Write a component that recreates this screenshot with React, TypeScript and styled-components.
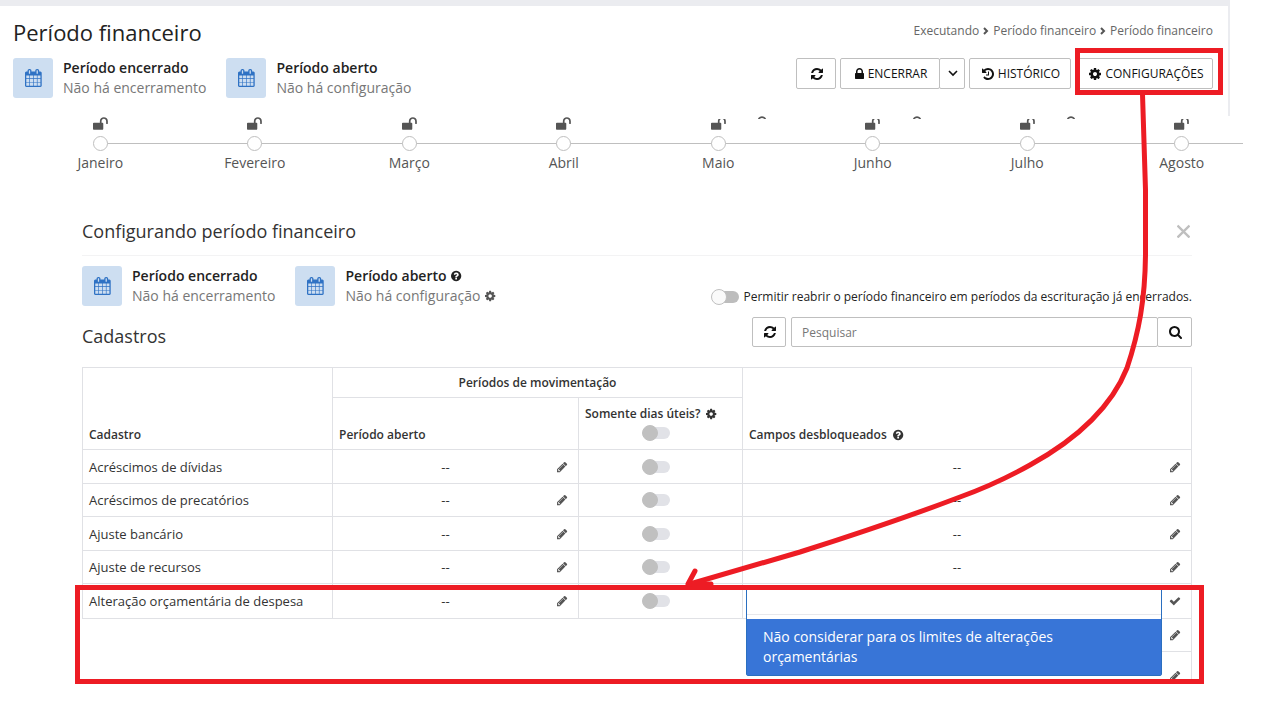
import React from "react";
import styled, { createGlobalStyle, css } from "styled-components";

const RED = "#ed1c24";
const LINE = "#e0e1e5";
const EDGE = "#bfbfbf";

const GlobalStyle = createGlobalStyle`
  *, *::before, *::after { box-sizing: border-box; }
  body { margin: 0; background: #fff; color: #222; font-family: "Open Sans", "Liberation Sans", sans-serif; font-size: 12px; }
  button, input { font: inherit; color: inherit; }
  h1, h2, h3, ul, p { margin: 0; padding: 0; font-weight: 400; }
`;

/* Icon outlines: [advance width, path] on a 1792-unit high grid */
const GLYPHS = {
  calendar: [1664, "M128 1664h288v-288h-288v288zM480 1664h320v-288h-320v288zM128 1312h288v-320h-288v320zM480 1312h320v-320h-320v320zM128 928h288v-288h-288v288zM864 1664h320v-288h-320v288zM480 928h320v-288h-320v288zM1248 1664h288v-288h-288v288zM864 1312h320v-320h-320v320zM512 448v-288q0-13-9.5-22.5t-22.5-9.5h-64q-13 0-22.5 9.5t-9.5 22.5v288q0 13 9.5 22.5t22.5 9.5h64q13 0 22.5-9.5t9.5-22.5zM1248 1312h288v-320h-288v320zM864 928h320v-288h-320v288zM1248 928h288v-288h-288v288zM1280 448v-288q0-13-9.5-22.5t-22.5-9.5h-64q-13 0-22.5 9.5t-9.5 22.5v288q0 13 9.5 22.5t22.5 9.5h64q13 0 22.5-9.5t9.5-22.5zM1664 384v1280q0 52-38 90t-90 38h-1408q-52 0-90-38t-38-90v-1280q0-52 38-90t90-38h128v-96q0-66 47-113t113-47h64q66 0 113 47t47 113v96h384v-96q0-66 47-113t113-47h64q66 0 113 47t47 113v96h128q52 0 90 38t38 90z"],
  refresh: [1536, "M1511 1056q0 5-1 7-64 268-268 434.500t-478 166.500q-146 0-282.500-55t-243.500-157l-129 129q-19 19-45 19t-45-19-19-45v-448q0-26 19-45t45-19h448q26 0 45 19t19 45-19 45l-137 137q71 66 161 102t187 36q134 0 250-65t186-179q11-17 53-117 8-23 30-23h192q13 0 22.500 9.500t9.500 22.500zM1536 256v448q0 26-19 45t-45 19h-448q-26 0-45-19t-19-45 19-45l138-138q-148-137-349-137-134 0-250 65t-186 179q-11 17-53 117-8 23-30 23h-199q-13 0-22.500-9.500t-9.500-22.500v-7q65-268 270-434.500t480-166.500q146 0 284 55.500t245 156.500l130-129q19-19 45-19t45 19 19 45z"],
  lock: [1152, "M320 768h512v-192q0-106-75-181t-181-75-181 75-75 181v192zM1152 864v576q0 40-28 68t-68 28h-960q-40 0-68-28t-28-68v-576q0-40 28-68t68-28h32v-192q0-184 132-316t316-132 316 132 132 316v192h32q40 0 68 28t28 68z"],
  unlock: [1664, "M1664 576v256q0 26-19 45t-45 19h-64q-26 0-45-19t-19-45v-256q0-106-75-181t-181-75-181 75-75 181v192h96q40 0 68 28t28 68v576q0 40-28 68t-68 28h-960q-40 0-68-28t-28-68v-576q0-40 28-68t68-28h672v-192q0-185 131.500-316.500t316.500-131.500 316.500 131.500 131.500 316.500z"],
  history: [1536, "M1536 896q0 156-61 298t-164 245-245 164-298 61q-172 0-327-72.500t-264-204.500q-7-10-6.500-22.500t8.500-20.500l137-138q10-9 25-9 16 2 23 12 73 95 179 147t225 52q104 0 198.500-40.500t163.500-109.500 109.500-163.500 40.500-198.500-40.500-198.500-109.500-163.500-163.500-109.500-198.500-40.500q-98 0-188 35.500t-160 101.500l137 138q31 30 14 69-17 40-59 40h-448q-26 0-45-19t-19-45v-448q0-42 40-59 39-17 69 14l130 129q107-101 244.500-156.500t284.500-55.500q156 0 298 61t245 164 164 245 61 298zM896 608v448q0 14-9 23t-23 9h-320q-14 0-23-9t-9-23v-64q0-14 9-23t23-9h224v-352q0-14 9-23t23-9h64q14 0 23 9t9 23z"],
  cog: [1536, "M1024 896q0-106-75-181t-181-75-181 75-75 181 75 181 181 75 181-75 75-181zM1536 787v222q0 12-8 23t-20 13l-185 28q-19 54-39 91 35 50 107 138 10 12 10 25t-9 23q-27 37-99 108t-94 71q-12 0-26-9l-138-108q-44 23-91 38-16 136-29 186-7 28-36 28h-222q-14 0-24.500-8.500t-11.500-21.500l-28-184q-49-16-90-37l-141 107q-10 9-25 9-14 0-25-11-126-114-165-168-7-10-7-23 0-12 8-23 15-21 51-66.500t54-70.500q-27-50-41-99l-183-27q-13-2-21-12.500t-8-23.500v-222q0-12 8-23t19-13l186-28q14-46 39-92-40-57-107-138-10-12-10-24 0-10 9-23 26-36 98.500-107.500t94.500-71.500q13 0 26 10l138 107q44-23 91-38 16-136 29-186 7-28 36-28h222q14 0 24.500 8.500t11.500 21.500l28 184q49 16 90 37l142-107q9-9 24-9 13 0 25 10 129 119 165 170 7 8 7 22 0 12-8 23-15 21-51 66.500t-54 70.500q26 50 41 98l183 28q13 2 21 12.500t8 23.500z"],
  search: [1664, "M1152 832q0-185-131.500-316.500t-316.500-131.500-316.500 131.500-131.500 316.500 131.500 316.500 316.500 131.500 316.500-131.500 131.500-316.500zM1664 1664q0 52-38 90t-90 38q-54 0-90-38l-343-342q-179 124-399 124-143 0-273.500-55.500t-225-150-150-225-55.500-273.500 55.500-273.500 150-225 225-150 273.500-55.500 273.500 55.500 225 150 150 225 55.500 273.500q0 220-124 399l343 343q37 37 37 90z"],
  question: [1536, "M896 1376v-192q0-14-9-23t-23-9h-192q-14 0-23 9t-9 23v192q0 14 9 23t23 9h192q14 0 23-9t9-23zM1152 704q0-88-55.500-163t-138.500-116-170-41q-243 0-371 213-15 24 8 42l132 100q7 6 19 6 16 0 25-12 53-68 86-92 34-24 86-24 48 0 85.500 26t37.500 59q0 38-20 61t-68 45q-63 28-115.500 86.500t-52.500 125.500v36q0 14 9 23t23 9h192q14 0 23-9t9-23q0-19 21.500-49.500t54.500-49.500q32-18 49-28.500t46-35 44.500-48 28-60.500 12.500-81zM1536 896q0 209-103 385.500t-279.500 279.500-385.500 103-385.500-103-279.500-279.500-103-385.500 103-385.500 279.500-279.500 385.500-103 385.500 103 279.500 279.500 103 385.500z"],
  pencil: [1536, "M363 1536l91-91-235-235-91 91v107h128v128h107zM886 608q0-22-22-22-10 0-17 7l-542 542q-7 7-7 17 0 22 22 22 10 0 17-7l542-542q7-7 7-17zM832 416l416 416-832 832h-416v-416zM1515 512q0 53-37 90l-166 166-416-416 166-165q36-38 90-38 53 0 91 38l235 234q37 39 37 91z"],
  check: [1792, "M1671 566q0 40-28 68l-724 724-136 136q-28 28-68 28t-68-28l-136-136-362-362q-28-28-28-68t28-68l136-136q28-28 68-28t68 28l294 295 656-657q28-28 68-28t68 28l136 136q28 28 28 68z"],
} as const;

const Svg = styled.svg`
  display: block;
  flex: none;
  fill: currentColor;
  overflow: visible;
`;

function Icon({ name, size = 14 }: { name: keyof typeof GLYPHS; size?: number }) {
  const [w, d] = GLYPHS[name];
  return (
    <Svg height={size} width={(size * w) / 1792} viewBox={`0 0 ${w} 1792`} aria-hidden="true">
      <path d={d} />
    </Svg>
  );
}

const Page = styled.div`
  position: relative;
  overflow: hidden;
  padding-bottom: 23px;
`;

const Shell = styled.header`
  display: flex;
  justify-content: space-between;
  margin-right: 38px;
  padding: 12px 15px 18px 13px;
  border-top: 6px solid #ebecf0;
  border-right: 2px solid #ebecf0;
`;

const PageTitle = styled.h1`
  font-size: 22px;
  line-height: 28px;
  margin-bottom: 12px;
`;

const Infos = styled.div`
  display: flex;
  gap: 20px;
`;

const Info = styled.div`
  display: flex;
  gap: 10px;
  font-size: 14px;
  line-height: 20px;
`;

const Tile = styled.div`
  display: grid;
  place-items: center;
  width: 40px;
  height: 40px;
  border-radius: 3px;
  background: #cddef1;
  color: #2f72c4;
`;

const InfoLine = styled.p<{ $strong?: boolean }>`
  display: flex;
  align-items: center;
  gap: 4px;
  color: ${(p) => (p.$strong ? "#222" : "#777")};
  font-weight: ${(p) => (p.$strong ? 600 : 400)};
`;

const Side = styled.div`
  display: flex;
  flex-direction: column;
  align-items: flex-end;
  gap: 17px;
  padding-top: 3px;
`;

const Crumbs = styled.nav`
  display: flex;
  align-items: center;
  gap: 4px;
  line-height: 20px;
  color: #666;
  a { color: inherit; text-decoration: none; }
`;

const Actions = styled.div`
  display: flex;
  gap: 4px;
`;

const Joined = styled.div`
  display: flex;
  > * + * { margin-left: -1px; }
`;

const Button = styled.button<{ $width: number; $height?: number }>`
  display: flex;
  align-items: center;
  justify-content: center;
  gap: 4px;
  flex: none;
  height: ${(p) => p.$height ?? 31}px;
  width: ${(p) => p.$width}px;
  padding: 0 0 0 2px;
  border: 1px solid ${EDGE};
  border-radius: 2px;
  background: #fff;
  color: #111;
`;

const frame = css`
  content: "";
  position: absolute;
  border: 5px solid ${RED};
  pointer-events: none;
  z-index: 3;
`;

const Framed = styled.div`
  position: relative;
  margin-left: 3px;
  &::after { ${frame} inset: -10px -10px -6px -3px; }
`;

const Timeline = styled.ol`
  display: grid;
  grid-template-columns: repeat(8, 1fr);
  margin: 0 9px 0 23px;
  padding: 0;
  list-style: none;
`;

const Month = styled.li<{ $last: boolean }>`
  position: relative;
  display: flex;
  flex-direction: column;
  align-items: center;
  font-size: 14px;
  line-height: 20px;
  color: #555;
  &::before {
    content: "";
    position: absolute;
    top: 27px;
    left: 50%;
    width: ${(p) => (p.$last ? "61px" : "100%")};
    height: 1px;
    background: ${EDGE};
  }
`;

const MonthLock = styled.span<{ $cut: boolean }>`
  height: 20px;
  clip-path: ${(p) => (p.$cut ? "inset(3px -2px 0 -2px)" : "none")};
`;

const Dot = styled.span`
  position: relative;
  z-index: 1;
  width: 15px;
  height: 15px;
  margin-bottom: 2px;
  border: 1px solid ${EDGE};
  border-radius: 50%;
  background: #fff;
`;

const Arc = styled.svg`
  position: absolute;
  top: 0;
  left: calc(50% + 40px);
`;

const Panel = styled.main`
  margin: 46px 76px 0 82px;
`;

const PanelHead = styled.div`
  display: flex;
  justify-content: space-between;
  align-items: center;
  padding-bottom: 12px;
  border-bottom: 1px solid #f3f3f4;
  margin-bottom: 10px;
  h2 { font-size: 18px; line-height: 24px; color: #333; }
`;

const Plain = styled.button<{ $width: number; $color: string }>`
  display: inline-flex;
  align-items: center;
  justify-content: center;
  flex: none;
  width: ${(p) => p.$width}px;
  padding: 0;
  border: 0;
  background: none;
  color: ${(p) => p.$color};
`;

const Bar = styled.div`
  display: flex;
  justify-content: space-between;
  align-items: flex-end;
  h3 { font-size: 18px; line-height: 22px; color: #333; }
  & + & { margin-top: 11px; }
`;

const SwitchLabel = styled.label`
  display: flex;
  align-items: center;
  gap: 4px;
  line-height: 18px;
`;

const Switch = styled.input<{ $outlined?: boolean }>`
  appearance: none;
  position: relative;
  display: block;
  flex: none;
  width: 28px;
  height: 16px;
  margin: 0;
  &::before {
    content: "";
    position: absolute;
    inset: 2px 0 2px 4px;
    border-radius: 6px;
    background: ${(p) => (p.$outlined ? "#bdbdbd" : "#e1e2e7")};
  }
  &::after {
    content: "";
    position: absolute;
    left: 0;
    top: 0;
    width: 16px;
    height: 16px;
    border-radius: 50%;
    background: ${(p) => (p.$outlined ? "#fafafa" : "#c0c0c0")};
    border: 1px solid #c0c0c0;
  }
`;

const Search = styled.form`
  display: flex;
  justify-content: flex-end;
  gap: 5px;
  width: 50%;
  ${Joined} { width: 401px; }
`;

const SearchInput = styled.input`
  flex: 1;
  min-width: 0;
  height: 30px;
  padding: 0 10px;
  border: 1px solid ${EDGE};
  border-radius: 2px;
  &::placeholder { color: #777; opacity: 1; }
`;

const TableArea = styled.div`
  position: relative;
  margin-top: 20px;
  height: 312px;
  &::after { ${frame} inset: 218px -12px -5px -7px; }
`;

const TableClip = styled.div`
  height: 100%;
  overflow: hidden;
`;

const Table = styled.table`
  width: 100%;
  table-layout: fixed;
  border-collapse: separate;
  border-spacing: 0;
  border-top: 1px solid ${LINE};
  line-height: 18px;
  th, td {
    padding: 0 6px;
    text-align: left;
    border-right: 1px solid ${LINE};
    border-bottom: 1px solid ${LINE};
  }
  thead tr:first-child th:first-child, td:first-child { border-left: 1px solid ${LINE}; }
  td { font-size: 13px; color: #333; }
  th { font-weight: 600; color: #333; vertical-align: bottom; padding-bottom: 5px; }
  tbody tr { height: 33px; }
  tbody tr:nth-child(odd) { height: 34px; }
  tbody tr:nth-child(5) { height: 35px; }
`;

const GroupTh = styled.th`
  && { height: 30px; text-align: center; }
`;

const SubTh = styled.th`
  height: 52px;
`;

const SwitchBox = styled.div`
  display: flex;
  justify-content: center;
  padding-right: 10px;
  th & { padding-top: 2px; padding-bottom: 3px; }
`;

const HeadText = styled.span`
  display: flex;
  align-items: center;
  gap: 6px;
`;

const Value = styled.div`
  display: flex;
  align-items: center;
  span { flex: 1; text-align: center; }
`;

const BlankTd = styled.td`
  &&&:first-child { border: 0; }
`;

const TailTd = styled.td`
  && { border-bottom: 0; padding: 0; }
`;

const TailEdit = styled.div<{ $height: number }>`
  display: flex;
  align-items: center;
  height: ${(p) => p.$height}px;
  width: 29px;
  margin-left: auto;
  padding-left: 3px;
  border-bottom: 1px solid ${LINE};
`;

const PickTd = styled.td`
  position: relative;
`;

const Picker = styled.div`
  position: absolute;
  z-index: 2;
  top: 1px;
  left: 3px;
  right: 29px;
  border: 1px solid #2a6fc0;
  border-radius: 2px;
  background: #fff;
`;

const PickInput = styled.input`
  display: block;
  width: 100%;
  height: 29px;
  margin-bottom: 4px;
  border: 0;
  border-bottom: 1px solid #e8e8ec;
  padding: 0 16px;
  outline: 0;
`;

const Option = styled.button`
  display: block;
  width: 100%;
  padding: 8px 16px;
  border: 0;
  background: #3875d7;
  color: #fff;
  font-size: 14px;
  line-height: 20px;
  text-align: left;
`;

const Arrow = styled.svg`
  position: absolute;
  top: 0;
  right: 0;
  z-index: 4;
  pointer-events: none;
`;

const MONTHS = ["Janeiro", "Fevereiro", "Março", "Abril", "Maio", "Junho", "Julho", "Agosto"];
const ROWS = ["Acréscimos de dívidas", "Acréscimos de precatórios", "Ajuste bancário", "Ajuste de recursos"];

function PeriodInfos({ extended }: { extended?: boolean }) {
  return (
    <Infos>
      <Info>
        <Tile><Icon name="calendar" size={18} /></Tile>
        <div>
          <InfoLine $strong>Período encerrado</InfoLine>
          <InfoLine>Não há encerramento</InfoLine>
        </div>
      </Info>
      <Info>
        <Tile><Icon name="calendar" size={18} /></Tile>
        <div>
          <InfoLine $strong>Período aberto {extended && <Icon name="question" size={12} />}</InfoLine>
          <InfoLine>
            Não há configuração{" "}
            {extended && <Plain type="button" $width={12} $color="#555" aria-label="Configurar"><Icon name="cog" size={12} /></Plain>}
          </InfoLine>
        </div>
      </Info>
    </Infos>
  );
}

function Edit({ icon = "pencil" }: { icon?: "pencil" | "check" }) {
  return (
    <Plain type="button" $width={20} $color="#555" aria-label={icon === "check" ? "Confirmar" : "Editar"}>
      <Icon name={icon} size={12} />
    </Plain>
  );
}

function Dashes() {
  return <Value><span>--</span><Edit /></Value>;
}

function Separator() {
  return (
    <svg width="6" height="8" viewBox="0 0 6 8" fill="none" stroke="#555" strokeWidth="2" aria-hidden="true">
      <path d="M1 1l3 3-3 3" />
    </svg>
  );
}

export default function App() {
  return (
    <Page>
      <GlobalStyle />
      <Shell>
        <div>
          <PageTitle>Período financeiro</PageTitle>
          <PeriodInfos />
        </div>
        <Side>
          <Crumbs>
            <a href="#executando">Executando</a>
            <Separator />
            <a href="#periodo">Período financeiro</a>
            <Separator />
            <a href="#atual">Período financeiro</a>
          </Crumbs>
          <Actions>
            <Button type="button" $width={40} aria-label="Atualizar"><Icon name="refresh" /></Button>
            <Joined>
              <Button type="button" $width={100}><Icon name="lock" />ENCERRAR</Button>
              <Button type="button" $width={26} aria-label="Mais opções">
                <svg width="10" height="7" viewBox="0 0 10 7" fill="none" stroke="currentColor" strokeWidth="1.6" aria-hidden="true">
                  <path d="M1 1l4 4 4-4" />
                </svg>
              </Button>
            </Joined>
            <Button type="button" $width={102}><Icon name="history" />HISTÓRICO</Button>
            <Framed>
              <Button type="button" $width={135}><Icon name="cog" />CONFIGURAÇÕES</Button>
            </Framed>
          </Actions>
        </Side>
      </Shell>

      <Timeline>
        {MONTHS.map((m, i) => (
          <Month key={m} $last={i === 7}>
            <MonthLock $cut={i > 3}><Icon name="unlock" size={16} /></MonthLock>
            {i > 3 && i < 7 && (
              <Arc width="8" height="3" viewBox="0 0 8 3" fill="none" stroke="#555" strokeWidth="1.6" aria-hidden="true">
                <path d="M.5 3Q4-.8 7.500 3" />
              </Arc>
            )}
            <Dot />
            {m}
          </Month>
        ))}
      </Timeline>

      <Panel>
        <PanelHead>
          <h2>Configurando período financeiro</h2>
          <Plain type="button" $width={17} $color="#bfbfbf" aria-label="Fechar">
            <svg width="13" height="14" viewBox="0 0 13 14" stroke="currentColor" strokeWidth="2.400" aria-hidden="true">
              <path d="M.5 1.500l12 12M12.500 1.500l-12 12" />
            </svg>
          </Plain>
        </PanelHead>
        <Bar>
          <PeriodInfos extended />
          <SwitchLabel>
            <Switch type="checkbox" $outlined />
            Permitir reabrir o período financeiro em períodos da escrituração já encerrados.
          </SwitchLabel>
        </Bar>
        <Bar>
          <h3>Cadastros</h3>
          <Search>
            <Button type="button" $width={34} $height={30} aria-label="Atualizar"><Icon name="refresh" /></Button>
            <Joined>
              <SearchInput type="text" placeholder="Pesquisar" aria-label="Pesquisar" />
              <Button type="button" $width={35} $height={30} aria-label="Buscar"><Icon name="search" /></Button>
            </Joined>
          </Search>
        </Bar>

        <TableArea>
          <TableClip>
            <Table>
              <colgroup>
                <col width="251" />
                <col width="246" />
                <col width="164" />
                <col />
              </colgroup>
              <thead>
                <tr>
                  <th rowSpan={2}>Cadastro</th>
                  <GroupTh colSpan={2}>Períodos de movimentação</GroupTh>
                  <th rowSpan={2}><HeadText>Campos desbloqueados <Icon name="question" size={12} /></HeadText></th>
                </tr>
                <tr>
                  <SubTh>Período aberto</SubTh>
                  <SubTh>
                    <HeadText>Somente dias úteis? <Icon name="cog" size={12} /></HeadText>
                    <SwitchBox><Switch type="checkbox" aria-label="Somente dias úteis" /></SwitchBox>
                  </SubTh>
                </tr>
              </thead>
              <tbody>
                {ROWS.map((r) => (
                  <tr key={r}>
                    <td>{r}</td>
                    <td><Dashes /></td>
                    <td><SwitchBox><Switch type="checkbox" aria-label={r} /></SwitchBox></td>
                    <td><Dashes /></td>
                  </tr>
                ))}
                <tr>
                  <td>Alteração orçamentária de despesa</td>
                  <td><Dashes /></td>
                  <td><SwitchBox><Switch type="checkbox" aria-label="Alteração orçamentária de despesa" /></SwitchBox></td>
                  <PickTd>
                    <Value><span /><Edit icon="check" /></Value>
                    <Picker>
                      <PickInput type="text" aria-label="Campos desbloqueados" />
                      <Option type="button">Não considerar para os limites de alterações orçamentárias</Option>
                    </Picker>
                  </PickTd>
                </tr>
                {[33, 48].map((h) => (
                  <tr key={h}>
                    <BlankTd colSpan={3} />
                    <TailTd><TailEdit $height={h}><Edit /></TailEdit></TailTd>
                  </tr>
                ))}
              </tbody>
            </Table>
          </TableClip>
        </TableArea>
      </Panel>

      <Arrow width="1268" height="702" viewBox="0 0 1268 702" fill="none" stroke={RED} strokeWidth="5" aria-hidden="true">
        <path d="M1142.500 94L1145.500 190V255C1145 300 1139 332 1127 368C1115 398 1088 433 1030 465C1005 479 985 488 960 497C910 516 860 533 800 552L690 584" />
        <path d="M695 571L688 584L711 584" strokeLinecap="round" strokeLinejoin="round" />
      </Arrow>
    </Page>
  );
}
